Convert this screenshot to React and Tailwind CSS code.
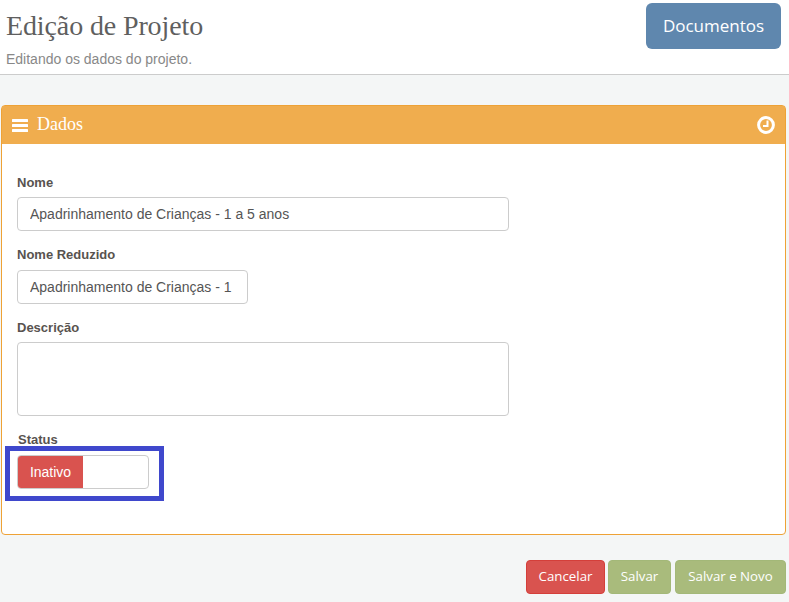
const sans = "font-['Liberation_Sans',Arial,sans-serif]";
const serif = "font-['Liberation_Serif','Times_New_Roman',serif]";
const ui = "font-['Open_Sans','Noto_Sans',sans-serif]";

const Field = ({ label, gap = 'mb-[5px]', className = '', children }) => (
  <div className={className}>
    <label className={`block h-[20px] text-[13px] leading-[20px] font-bold text-[#58534f] ${gap}`}>{label}</label>
    {children}
  </div>
);

const TextInput = ({ value, className = '' }) => (
  <input
    readOnly
    value={value}
    className={`block h-[34px] rounded-[4px] border border-[#ccc] bg-white px-[12px] text-[14px] text-[#555] outline-none ${className}`}
  />
);

const ActionButton = ({ className = '', children }) => (
  <button className={`h-[34px] whitespace-nowrap rounded-[4px] border text-[13.3px] text-white ${ui} ${className}`}>
    {children}
  </button>
);

const BarsIcon = () => (
  <svg width="16" height="13" viewBox="0 0 16 13" fill="currentColor">
    <rect x="0" y="0" width="16" height="3" rx="0.5" />
    <rect x="0" y="5" width="16" height="3" rx="0.5" />
    <rect x="0" y="10" width="16" height="3" rx="0.5" />
  </svg>
);

const ClockIcon = () => (
  <svg width="18" height="18" viewBox="0 0 18 18" fill="none" stroke="currentColor">
    <circle cx="9" cy="9" r="7.4" strokeWidth="3" />
    <path d="M10.5 4.5V10H6" strokeWidth="2" />
  </svg>
);

export default function App() {
  return (
    <div className={`min-h-[602px] bg-[#f4f6f6] ${sans}`}>
      {/* Cabeçalho */}
      <header className="flex h-[75px] justify-between border-b border-[#ccc] bg-white pl-[6px] pr-[8px]">
        <div>
          <h1 className={`mt-[8px] h-[35px] text-[28px] leading-[35px] tracking-[-0.12px] text-[#5f5f5f] ${serif}`}>Edição de Projeto</h1>
          <p className="mt-[7px] text-[14px] leading-[18px] text-[#888]">Editando os dados do projeto.</p>
        </div>
        <button className={`mt-[3px] h-[46px] w-[135px] rounded-[6px] bg-[#5f87ae] text-[17px] text-white ${ui}`}>
          Documentos
        </button>
      </header>

      {/* Painel */}
      <section className="ml-px mr-[3px] mt-[30px] h-[430px] rounded-[4px] border border-[#eea236] bg-white">
        <div className="flex h-[38px] items-center justify-between bg-[#f0ad4e] pl-[10px] pr-[10px] text-white">
          <div className="flex items-center gap-[9px]">
            <BarsIcon />
            <span className={`-mt-[2px] text-[18px] ${serif}`}>Dados</span>
          </div>
          <ClockIcon />
        </div>

        <div className="pl-[15px] pt-[29px]">
          <Field label="Nome" gap="mb-[4px]">
            <TextInput value="Apadrinhamento de Crianças - 1 a 5 anos" className="w-[492px]" />
          </Field>
          <Field label="Nome Reduzido" className="mt-[14px]">
            <TextInput value="Apadrinhamento de Crianças - 1" className="w-[231px]" />
          </Field>
          <Field label="Descrição" gap="mb-[4px]" className="mt-[14px]">
            <textarea readOnly className="block h-[74px] w-[492px] resize-none rounded-[4px] border border-[#ccc] bg-white outline-none" />
          </Field>
          <Field label="Status" className="ml-px mt-[14px]">
            <div className="relative -ml-px w-[132px]">
              <div className="flex h-[34px] overflow-hidden rounded-[4px] border border-[#ccc] bg-white">
                <span className="flex w-[65px] items-center justify-center bg-[#d9534f] text-[14px] text-white">Inativo</span>
              </div>
              {/* Marcação azul sobre o campo */}
              <div className="absolute left-[-12px] top-[-9px] h-[55px] w-[159px] border-[5px] border-[#3f48cc]" />
            </div>
          </Field>
        </div>
      </section>

      {/* Ações */}
      <div className="mr-[3px] mt-[25px] flex justify-end">
        <ActionButton className="w-[79px] border-[#d43f3a] bg-[#d9534f]">Cancelar</ActionButton>
        <ActionButton className="ml-[3px] w-[63px] border-[#a3b878] bg-[#a9bb7c]">Salvar</ActionButton>
        <ActionButton className="ml-[4px] w-[111px] border-[#a3b878] bg-[#a9bb7c]">Salvar e Novo</ActionButton>
      </div>
    </div>
  );
}
